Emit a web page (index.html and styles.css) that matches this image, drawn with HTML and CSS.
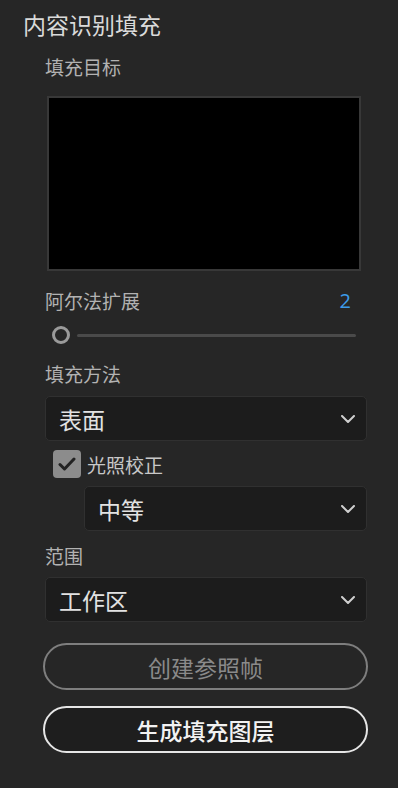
FILE: index.html
```html
<!DOCTYPE html>
<html lang="zh-CN">
<head>
    <meta charset="UTF-8">
    <meta name="viewport" content="width=device-width, initial-scale=1.0">
    <title>内容识别填充</title>
    <link rel="stylesheet" href="styles.css">
</head>
<body>
    <div class="panel">
        <div class="title">内容识别填充</div>
        <div class="content">
            <div class="label target-label">填充目标</div>
            <div class="preview"></div>

            <div class="label-row">
                <span class="label">阿尔法扩展</span>
                <span class="value">2</span>
            </div>
            <div class="slider">
                <span class="knob"></span>
                <span class="track"></span>
            </div>

            <div class="label method-label">填充方法</div>
            <div class="select">
                <span>表面</span>
                <svg class="chevron" width="14" height="8" viewBox="0 0 14 8"><path d="M1 1 L7 7 L13 1" fill="none" stroke="#cfcfcf" stroke-width="2" stroke-linecap="round" stroke-linejoin="round"/></svg>
            </div>

            <div class="check-row">
                <span class="checkbox">
                    <svg width="18" height="14" viewBox="0 0 18 14"><path d="M2 7.5 L6.5 12 L16 2" fill="none" stroke="#222" stroke-width="3" stroke-linecap="round" stroke-linejoin="round"/></svg>
                </span>
                <span class="check-text">光照校正</span>
            </div>
            <div class="select sub-select">
                <span>中等</span>
                <svg class="chevron" width="14" height="8" viewBox="0 0 14 8"><path d="M1 1 L7 7 L13 1" fill="none" stroke="#cfcfcf" stroke-width="2" stroke-linecap="round" stroke-linejoin="round"/></svg>
            </div>

            <div class="label range-label">范围</div>
            <div class="select range-select">
                <span>工作区</span>
                <svg class="chevron" width="14" height="8" viewBox="0 0 14 8"><path d="M1 1 L7 7 L13 1" fill="none" stroke="#cfcfcf" stroke-width="2" stroke-linecap="round" stroke-linejoin="round"/></svg>
            </div>

            <button class="pill disabled">创建参照帧</button>
            <button class="pill primary">生成填充图层</button>
        </div>
    </div>
</body>
</html>
```

FILE: styles.css
```css
body {
    background: #262626;
    color: #d8d8d8;
    font-family: "Noto Sans CJK SC", "Noto Sans", sans-serif;
    margin: 0;
    width: 398px;
    height: 788px;
    overflow: hidden;
}
.panel {
    padding: 9px 31px 0 23px;
}
.title {
    font-size: 23px;
    line-height: 30px;
    color: #dadada;
}
.content {
    padding-left: 22px;
    display: flex;
    flex-direction: column;
}
.label {
    font-size: 19px;
    line-height: 24px;
    color: #b2b2b2;
}
.target-label {
    margin-top: 16px;
}
.preview {
    margin: 17px 6px 0 2px;
    height: 171px;
    background: #000;
    border: 2px solid #383838;
}
.label-row {
    margin-top: 18px;
    display: flex;
    justify-content: space-between;
    align-items: center;
    padding-right: 16px;
}
.value {
    font-family: "Open Sans", sans-serif;
    font-size: 20px;
    line-height: 24px;
    color: #3d9be9;
}
.slider {
    margin-top: 12px;
    height: 20px;
    display: flex;
    align-items: center;
    padding-left: 7px;
    padding-right: 11px;
}
.knob {
    width: 12px;
    height: 12px;
    border: 3px solid #9a9a9a;
    border-radius: 50%;
    flex-shrink: 0;
}
.track {
    flex: 1;
    height: 3px;
    margin-left: 7px;
    background: #4a4a4a;
    border-radius: 2px;
}
.method-label {
    margin-top: 17px;
}
.select {
    margin-top: 10px;
    height: 43px;
    border: 1px solid #303030;
    border-radius: 5px;
    background: #1c1c1c;
    display: flex;
    align-items: center;
    justify-content: space-between;
    padding: 0 11px 0 13px;
    font-size: 23px;
    color: #e2e2e2;
}
.check-row {
    margin-top: 9px;
    margin-left: 8px;
    display: flex;
    align-items: center;
    gap: 6px;
}
.checkbox {
    width: 28px;
    height: 28px;
    background: #8c8c8c;
    border-radius: 4px;
    display: flex;
    align-items: center;
    justify-content: center;
}
.check-text {
    font-size: 19px;
    color: #c8c8c8;
}
.sub-select {
    margin-top: 8px;
    margin-left: 39px;
}
.range-label {
    margin-top: 13px;
}
.range-select {
    margin-top: 9px;
}
.pill {
    font-family: "Noto Sans CJK SC", sans-serif;
    font-size: 23px;
    height: 47px;
    margin-left: -2px;
    width: 325px;
    border-radius: 24px;
    background: transparent;
    padding: 0;
}
.pill.disabled {
    margin-top: 21px;
    border: 2px solid #7e7e7e;
    color: #8a8a8a;
}
.pill.primary {
    margin-top: 16px;
    border: 2px solid #e6e6e6;
    color: #f2f2f2;
    font-weight: 500;
    background: #1e1e1e;
}
```
